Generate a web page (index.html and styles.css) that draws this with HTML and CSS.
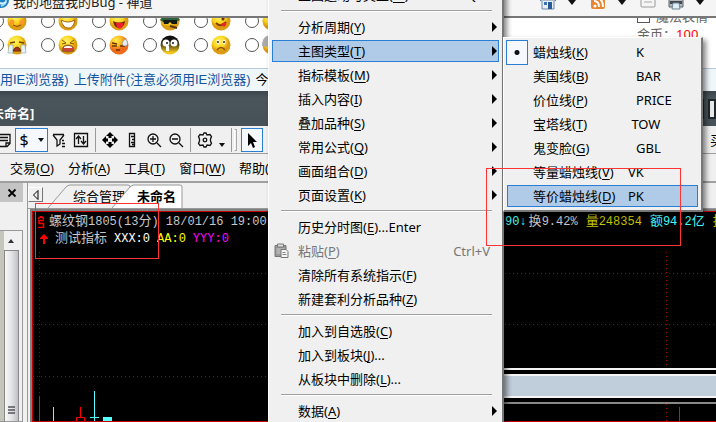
FILE: index.html
```html
<!DOCTYPE html>
<html lang="zh-CN">
<head>
<meta charset="utf-8">
<title>未命名</title>
<link rel="stylesheet" href="styles.css">
</head>
<body>
<svg class="defs" aria-hidden="true">
  <defs>
    <radialGradient id="gold" cx="40%" cy="30%"><stop offset="0" stop-color="#fff36a"/><stop offset=".65" stop-color="#fbd51c"/><stop offset="1" stop-color="#dc9c12"/></radialGradient>
    <radialGradient id="orange" cx="35%" cy="25%"><stop offset="0" stop-color="#fff04a"/><stop offset=".6" stop-color="#fbb623"/><stop offset="1" stop-color="#f06a1c"/></radialGradient>
    <linearGradient id="dark" x2="0" y2="1"><stop offset=".3" stop-color="#111"/><stop offset=".9" stop-color="#f4c81c"/></linearGradient>
  </defs>
</svg>
<header class="browser">
  <svg class="globe" viewBox="0 0 16 16"><circle cx="8" cy="8" r="8" fill="#1f7fc4"/><path d="M2 5q6-5 11 1q1 6-5 8" fill="none" stroke="#9bd8f6" stroke-width="2"/><path d="M5 10q4 3 8 0" fill="none" stroke="#d6f1fd" stroke-width="2"/></svg>
  <span class="page-title">我的地盘我的Bug - 禅道</span>
  <nav class="browser-tools">
    <svg viewBox="0 0 16 16"><path d="M2 6h12v9H2z" fill="#e8eef5" stroke="#6f87a5"/><path d="M0 7l8-7 8 7" fill="#a8bdd2" stroke="#5c7696"/><path d="M8 8h4v7H8z" fill="#285a96"/><path d="M4 8h3v3H4z" fill="#3b74b4"/></svg>
    <i class="caret"></i>
    <svg viewBox="0 0 16 16"><rect x="1" y="1" width="14" height="14" rx="2" fill="#e98430"/><path d="M4 3q9 0 9 10M4 7q5 0 5 6" fill="none" stroke="#fff" stroke-width="2"/><circle cx="5" cy="12" r="1.5" fill="#fff"/></svg>
    <i class="caret"></i>
    <svg viewBox="0 0 16 16"><rect x="1" y="1" width="14" height="12" rx="1" fill="#f5f5f5" stroke="#999"/><path d="M4 8h8" stroke="#aaa"/></svg>
    <svg viewBox="0 0 16 16"><path d="M1 5h14v8H1z" fill="#b4b8bb" stroke="#5d6367"/><path d="M2 7h12v3H2z" fill="#43494d"/><path d="M5 9h6l1 6H4z" fill="#dff0fa" stroke="#6f8795"/></svg>
    <i class="caret"></i>
    <span>页面</span>
  </nav>
</header>

<main class="page">
  <div class="faces">
    <div class="face-row">
      <label><input type="radio" name="face" aria-label="害羞"><svg viewBox="0 0 20 20"><circle cx="10" cy="10" r="9.5" fill="url(#gold)"/><circle cx="5" cy="11" r="2.5" fill="#f79a2a"/><circle cx="15" cy="11" r="2.5" fill="#f79a2a"/><path d="M6 14q4 3 8 0" fill="none" stroke="#974510"/></svg></label>
      <label><input type="radio" name="face" aria-label="大笑"><svg viewBox="0 0 20 20"><circle cx="10" cy="10" r="9.5" fill="url(#gold)"/><path d="M3 9q7 4 14 0q-2 9-7 8q-5 0-7-8z" fill="#fff" stroke="#a86716"/></svg></label>
      <label><input type="radio" name="face" aria-label="吐舌"><svg viewBox="0 0 20 20"><circle cx="10" cy="10" r="9.5" fill="url(#gold)"/><path d="M4 10q6 3 12 0-1 7-6 7t-6-7z" fill="#7e2110"/><path d="M7 12h7v3q-3 5-6 1z" fill="#ef202c"/></svg></label>
      <label><input type="radio" name="face" aria-label="大兵"><svg viewBox="0 0 20 20"><circle cx="10" cy="10" r="9.5" fill="url(#gold)"/><path d="M0 9q10-14 20 0l-4 2H3z" fill="#2b623d"/><path d="M3 9h14v4h-5l-2-2-2 2H4z" fill="#161a14"/><path d="M10 15l7 2" stroke="#583315" stroke-width="2"/></svg></label>
      <label><input type="radio" name="face" aria-label="馋"><svg viewBox="0 0 20 20"><circle cx="10" cy="10" r="9.5" fill="url(#gold)"/><path d="M5 12q5 5 10-1" fill="none" stroke="#8d3c0b" stroke-width="2"/><path d="M10 13q6-4 5 1-2 4-5-1z" fill="#e72824"/><circle cx="12" cy="8" r="1.5" fill="#733410"/></svg></label>
      <label><input type="radio" name="face" aria-label="微笑"><svg viewBox="0 0 20 20"><circle cx="10" cy="10" r="9.5" fill="url(#gold)"/></svg></label>
    </div>
    <div class="face-row">
      <label><input type="radio" name="face" aria-label="大哭"><svg viewBox="0 0 20 20"><circle cx="10" cy="10" r="9.5" fill="url(#gold)"/><path d="M3 8l5-1M12 7l5 1" stroke="#75440a" stroke-width="1.5"/><path d="M2 10h4v8H1zM14 10h4l1 8h-5z" fill="#e5f3f6" stroke="#8d9d95" stroke-width=".6"/><path d="M6 16q4-8 8 0z" fill="#a83520" stroke="#663007"/></svg></label>
      <label><input type="radio" name="face" aria-label="抓狂"><svg viewBox="0 0 20 20"><circle cx="10" cy="10" r="9.5" fill="url(#gold)"/><path d="M4 5l4 3-4 1M16 5l-4 3 4 1" fill="none" stroke="#87540d"/><path d="M4 16q0-6 6-6t6 6q-6 2-12 0z" fill="#c9433d" stroke="#93611a"/><path d="M6 12q4-2 8 0v1H6z" fill="#fff"/></svg></label>
      <label><input type="radio" name="face" aria-label="冷汗"><svg viewBox="0 0 20 20"><circle cx="10" cy="10" r="9.5" fill="url(#orange)"/><path d="M3 8l5 1M3 11h5M11 11h5M7 15h4" stroke="#6b3509" stroke-width="1.3"/><path d="M16 4q-5 5-1 7 5 0 3-5z" fill="#e6eff2" stroke="#7f9aa4" stroke-width=".6"/></svg></label>
      <label><input type="radio" name="face" aria-label="阴险"><svg viewBox="0 0 20 20"><circle cx="10" cy="10" r="9.5" fill="url(#dark)"/><circle cx="6" cy="8" r="3.5" fill="#fff"/><circle cx="14" cy="8" r="3.5" fill="#fff"/><circle cx="7" cy="8" r="1" fill="#111"/><circle cx="13" cy="8" r="1" fill="#111"/><path d="M6 11h3v5H6z" fill="#fff"/></svg></label>
      <label><input type="radio" name="face" aria-label="难过"><svg viewBox="0 0 20 20"><circle cx="10" cy="10" r="9.5" fill="url(#gold)"/><ellipse cx="7" cy="7" rx="1.5" ry="2.5" fill="#fff"/><ellipse cx="13" cy="7" rx="1.5" ry="2.5" fill="#fff"/><path d="M7 6v2M13 6v2" stroke="#452604" stroke-width="1.5"/><path d="M6 15q4-5 8 0" fill="none" stroke="#8b4d08" stroke-width="1.3"/></svg></label>
      <label><input type="radio" name="face" aria-label="老人"><svg viewBox="0 0 20 20"><circle cx="10" cy="10" r="9.5" fill="url(#gold)"/><path d="M0 11q0-11 10-11v7l-4 5z" fill="#aaa"/></svg></label>
    </div>
  </div>
  <div class="options">
    <label><input type="checkbox"> 魔法表情</label>
    <div>金币：<b>100</b></div>
  </div>
</main>
<div class="upload"><a href="#">须用IE浏览器)</a><a href="#">上传附件(注意必须用IE浏览器)</a><em>今</em></div>

<div class="titlebar"><strong>未命名]</strong><i></i><i></i></div>

<div class="toolbar">
  <button aria-label="报表"><svg viewBox="0 0 16 16"><path d="M1 2.500h13v9l-3 3H1zM2 5.500h10M2 8.500h10M10 14v-3h4" class="line"/></svg></button>
  <button class="money active"><span>$</span><i class="caret"></i></button>
  <button aria-label="筛选"><svg viewBox="0 0 16 16"><path d="M2 2.500h11M2 3l4 5v6l3-2V8l4-5M11 8.500h2M11 11.500h3M11 14.500h3" class="line"/></svg></button>
  <button aria-label="排序"><svg viewBox="0 0 16 16"><path d="M1.500 1.500h13v13h-13zM5.500 12V4.500M3 7l2.500-3L8 7M10.500 4v8M8 9l2.500 3L13 9" class="line"/></svg></button>
  <hr>
  <button aria-label="移动"><svg viewBox="0 0 16 16"><path d="M8 0l4 4H9.500v2h-3V4H4zM8 16l4-4H9.500v-2h-3v2H4zM0 8l4-4v2.500h2v3H4V12zM16 8l-4-4v2.500h-2v3h2V12z"/></svg></button>
  <button aria-label="测量"><svg viewBox="0 0 16 16"><path d="M5.500 1.500h5v13h-5zM7 4.500h3M8 7.500h2M7 10.500h3M8 12.500h2" class="line"/></svg></button>
  <button aria-label="放大"><svg viewBox="0 0 16 16"><circle cx="7" cy="7" r="5" class="line"/><path d="M4 7h6M7 4v6M11 11l4 4" class="line"/></svg></button>
  <button aria-label="缩小"><svg viewBox="0 0 16 16"><circle cx="7" cy="7" r="5" class="line"/><path d="M4 7h6M11 11l4 4" class="line"/></svg></button>
  <hr>
  <button class="gear" aria-label="设置"><svg viewBox="0 0 16 16"><path d="M6 3l1-2h2l1 2 3-.5 1.500 2L13.500 7v2l1 2.500-1.500 2-3-.5-1 2H7l-1-2-3 .5-1.500-2 1-2.500V7l-1-2.500 1.500-2z" class="line"/><circle cx="8" cy="8" r="1.800" class="line"/></svg><i class="caret"></i></button>
  <hr><span class="grip"></span>
  <button class="active pointer" aria-label="选择"><svg viewBox="0 0 16 16"><path d="M4 1v13l3-3 2 5 2-1-2-5h4z"/></svg></button>
  <span class="buy">买</span>
</div>

<nav class="menubar">
  <button>交易(<u>O</u>)</button><button>分析(<u>A</u>)</button><button>工具(<u>T</u>)</button><button>窗口(<u>W</u>)</button><button>帮助(<u>H</u>)</button>
</nav>

<section class="workspace">
  <aside class="dock">
    <button class="close" aria-label="关闭"><svg viewBox="0 0 10 10"><path d="M1.500 1.500l7 7M8.500 1.500l-7 7" stroke="#000" stroke-width="1.800"/></svg></button>
    <div class="list"><div class="scroll"><svg viewBox="0 0 14 19"><path d="M4 12l3-4 3 4z" fill="#333"/></svg><div class="thumb"><svg viewBox="0 0 8 9"><path d="M0 1h7M0 4h7M0 7h7" stroke="#555" stroke-width="1.500"/></svg></div></div></div>
  </aside>
  <div class="content">
    <div class="tabs">
      <button class="prev" aria-label="上一个"><svg viewBox="0 0 10 10"><path d="M7 .5v9L2.500 5z" fill="none" stroke="#000"/></svg></button>
      <button class="tab first"><svg viewBox="0 0 84 24"><path d="M0 24L18 3q2-2 4-2h58q2 0 2 2v21" fill="#f0f0f0" stroke="#999"/></svg><span>综合管理</span></button>
      <button class="tab current"><svg viewBox="0 0 72 24"><path d="M0 24L18 3q2-2 4-2h46q2 0 2 2v21" fill="#fff" stroke="#999"/></svg><span>未命名</span></button>
    </div>
    <div class="chart">
      <svg class="plot" aria-hidden="true"><g transform="translate(-33 -212)">
        <path class="grid" d="M33 273.500H2000M33 324.500H2000M33 376.500H500M39.500 252V396M666.500 252V366M666.500 404V1000"/>
        <path d="M39.500 396V1000M80.500 407v10M76.500 1000V417.500h8V1000M679.500 407V1000" fill="none" stroke="#f00"/>
        <path d="M53.500 407V1000M94.500 391V1000M90 417.500h9" stroke="#5ff"/><path d="M103 417h9v600h-9z" fill="#5ff"/>
        <path d="M300 368h2000v2H300zM300 374h2000v24H300z" fill="#f4f4f4"/><path d="M300 376h2000v20H300z" fill="#c0cdda"/><path d="M300 402h2000v2H300z" fill="#888"/>
      </g></svg>
      <div class="quote"><div class="symbol"><svg viewBox="0 0 8 12"><path d="M1 3l3-3 3 3M7 4.500H2v3h4.500v4H1" fill="none" stroke="#f00" stroke-width="1.500"/></svg><b>螺纹钢</b>1805(13<b>分</b>) 18/01/16 19:00(</div><div class="stats"><span class="cyan">90↓</span><span><b>换</b>9.42%</span><span class="yellow"><b>量</b>248354</span><span class="cyan"><b>额</b>94.2<b>亿</b></span><span class="yellow"><b>持</b></span></div></div>
      <div class="quote"><svg viewBox="0 0 8 12"><path d="M0 5l4-4 4 4v1H5v5H3V6H0z" fill="#f00"/></svg><span class="metric"><b>测试指标</b></span><span class="metric white">XXX:0</span><span class="metric bright">AA:0</span><span class="metric magenta">YYY:0</span></div>
    </div>
  </div>
</section>

<div class="menu context">
  <button>主图运动与类型(<u>M</u>)<kbd class="near">Q</kbd></button>
  <hr>
  <button class="sub">分析周期(<u>Y</u>)</button>
  <button class="sub selected">主图类型(<u>T</u>)</button>
  <button class="sub">指标模板(<u>M</u>)</button>
  <button class="sub">插入内容(<u>I</u>)</button>
  <button class="sub">叠加品种(<u>S</u>)</button>
  <button class="sub">常用公式(<u>Q</u>)</button>
  <button class="sub">画面组合(<u>D</u>)</button>
  <button class="sub">页面设置(<u>K</u>)</button>
  <hr>
  <button>历史分时图(<u>E</u>)...Enter</button>
  <button class="paste" disabled><svg viewBox="0 0 16 16"><path d="M1.500 2.500h11v11h-11z" fill="#999" stroke="#777"/><path d="M4 1h6v3H4z" fill="#ddd" stroke="#777"/><path d="M3 6h8M3 8h8M3 10h8" stroke="#c8c8c8"/><path d="M7.500 6.500h5l2 2v6h-7z" fill="#f4f4f4" stroke="#777"/><path d="M9 9.500h3M9 11.500h4" stroke="#888"/></svg>粘贴(<u>P</u>)<kbd>Ctrl+V</kbd></button>
  <button>清除所有系统指示(<u>F</u>)</button>
  <button>新建套利分析品种(<u>Z</u>)</button>
  <hr>
  <button>加入到自选股(<u>C</u>)</button>
  <button>加入到板块(<u>J</u>)...</button>
  <button>从板块中删除(<u>L</u>)...</button>
  <hr>
  <button class="sub">数据(<u>A</u>)</button>
</div>

<div class="menu types">
  <button class="checked"><span class="wide">蜡烛线(<u>K</u>)</span>K</button>
  <button><span class="wide">美国线(<u>B</u>)</span>BAR</button>
  <button><span class="wide">价位线(<u>P</u>)</span>PRICE</button>
  <button><span>宝塔线(<u>T</u>)</span>&nbsp;TOW</button>
  <button><span class="wide">鬼变脸(<u>G</u>)</span>GBL</button>
  <button><span>等量蜡烛线(<u>V</u>)</span>VK</button>
  <button class="selected"><span>等价蜡烛线(<u>D</u>)</span>PK</button>
</div>
<div class="mark mark-symbol"></div>
<div class="mark mark-type"></div>
</body>
</html>
```
FILE: styles.css
```css
* { box-sizing: border-box; }
body {
  margin: 0;
  height: 100vh;
  overflow: hidden;
  position: relative;
  display: flex;
  flex-direction: column;
  background: #f0f0f0;
  color: #000;
  font: 13px/20px "Noto Sans", "Noto Sans CJK SC", sans-serif;
}
button { font: inherit; color: inherit; background: none; border: 0; padding: 0; }
svg { display: block; flex: none; }
b { font-weight: 400; }
u { text-underline-offset: 2px; }
.defs { position: absolute; width: 0; height: 0; }
.line { fill: none; stroke: #111; stroke-width: 1.3; }
.caret { border: 3px solid transparent; border-top: 4px solid #111; border-bottom: 0; flex: none; }

.browser { flex: none; height: 18px; display: flex; background: #f5f5f5; border-bottom: 2px solid #777; overflow: hidden; }
.browser > * { margin-top: -8px; }
.globe { width: 16px; height: 16px; margin-left: -7px; }
.page-title { flex: 1; margin-left: 4px; color: #222; }
.browser-tools { display: flex; align-items: center; gap: 12px; height: 20px; width: 176px; }
.browser-tools svg { width: 16px; height: 16px; }
.browser-tools .caret { border-width: 5px 4px 0; margin-right: 2px; }
.browser-tools span { flex: none; }

.page { flex: none; height: 50px; display: flex; background: #fff; overflow: hidden; }
.faces { flex: 1; margin: -9px 0 0 -10px; }
.face-row { display: flex; height: 24px; }
.face-row label { display: flex; align-items: center; gap: 3px; width: 51px; flex: none; }
.face-row svg { width: 20px; height: 20px; }
.face-row input { appearance: none; width: 14px; height: 14px; margin: 0; border: 1px solid #555; border-radius: 50%; background: #fff; }
.options { width: 79px; flex: none; margin-top: -11px; color: #666; line-height: 18px; white-space: nowrap; }
.options label { display: flex; gap: 6px; align-items: center; }
.options input { appearance: none; width: 13px; height: 13px; margin: 0; border: 1px solid #555; }
.options b { color: #f00; }

.upload { flex: none; display: flex; gap: 5px; height: 23px; padding-top: 1px; border-top: 1px solid #b4cbdc; background: #f0f7fb; white-space: nowrap; font-family: "Liberation Sans", "Noto Sans CJK SC", sans-serif; }
.upload a { color: #15559f; text-decoration: none; }
.upload a:first-child { margin-left: -13px; }
.upload em { font-style: normal; }

.titlebar { flex: none; height: 35px; display: flex; align-items: center; gap: 4px; background: linear-gradient(#3c464c, #4a555b 20%, #465258); color: #fff; }
.titlebar strong { flex: 1; margin: 8px 0 0 -9px; }
.titlebar i { width: 8px; height: 20px; background: #e8e8e8; border: 2px solid #20282c; }

.toolbar { flex: none; height: 28px; display: flex; align-items: center; gap: 6px; border-bottom: 1px solid #a0a0a0; overflow: hidden; }
.toolbar button { display: flex; align-items: center; justify-content: center; flex: none; }
.toolbar svg { width: 16px; height: 16px; }
.toolbar button:first-child { margin-left: -4px; }
.toolbar .active { border: 1px solid #2a7fd4; height: 24px; background: #f5f9fd; }
.toolbar .money { width: 33px; gap: 9px; font-size: 16px; margin: 0 -3px; }
.toolbar hr { width: 1px; height: 24px; margin: 0; border: 0; background: #999; flex: none; }
.toolbar .gear { gap: 6px; }
.gear .caret { margin-top: 10px; }
.grip { width: 3px; height: 22px; border: 1px solid #aaa; border-left-color: #fff; margin-left: -4px; }
.toolbar .pointer { width: 22px; margin-left: -2px; }
.buy { margin: 0 -7px 0 auto; }

.menubar { flex: none; height: 29px; display: flex; align-items: center; gap: 14px; padding-left: 10px; border-bottom: 2px solid #a0a0a0; }

.workspace { flex: 1; display: flex; min-height: 0; }
.dock { flex: none; width: 28px; display: flex; flex-direction: column; gap: 28px; border-right: 1px solid #999; }
.close { width: 23px; height: 19px; background: #c4c4c4; display: flex; align-items: center; justify-content: center; }
.close svg { width: 10px; height: 10px; }
.list { flex: 1; width: 23px; display: flex; background: #c5c5b9; border: 1px solid #999; border-left: 0; }
.scroll { margin-left: 4px; flex: 1; display: flex; flex-direction: column; background: #f0f0f0; }
.scroll > svg { width: 14px; height: 19px; }
.thumb { flex: 1; width: 15px; display: flex; align-items: end; justify-content: center; padding-bottom: 6px; background: linear-gradient(90deg, #f8f8f8, #e3e3e5 50%, #bfc0c8); border: 1px solid #888; border-bottom: 0; }
.thumb svg { width: 8px; height: 9px; }
.content { flex: 1; min-width: 0; display: flex; flex-direction: column; }
.tabs { flex: none; height: 26px; display: flex; align-items: end; border-bottom: 1px solid #999; }
.prev { width: 15px; height: 15px; margin: 0 5px 6px 0; border: 1px solid #777; border-top-color: #fff; border-left-color: #fff; display: grid; place-items: center; }
.prev svg { width: 10px; height: 10px; }
.tab { position: relative; height: 24px; padding-left: 25px; text-align: left; white-space: nowrap; }
.tab svg { position: absolute; left: 0; top: 0; width: 100%; height: 24px; }
.tab span { position: relative; }
.first { width: 84px; }
.current { width: 72px; margin-left: -20px; font-weight: 700; }
.chart { flex: 1; margin: 2px 0 0 4px; position: relative; overflow: hidden; background: #000; border: 1px solid #c00000; border-right: 0; box-shadow: 0 0 0 2px #808080; padding-top: 1px; color: #c8c8c8; font: 12px/16px "Liberation Mono", "Noto Sans CJK SC", monospace; }
.chart b { font-size: 13px; }
.plot { position: absolute; left: 0; top: 0; width: 100%; height: 100%; }
.grid { fill: none; stroke: #a00000; stroke-dasharray: 1 3; }
.quote { position: relative; display: flex; align-items: center; height: 17px; padding-left: 4px; white-space: nowrap; }
.quote svg { width: 8px; height: 12px; }
.quote + .quote { padding-left: 7px; }
.symbol { flex: none; width: 468px; display: flex; align-items: center; white-space: pre; }
.symbol svg { margin-right: 4px; }
.stats { display: flex; gap: 8px; }
.stats .cyan:first-child { margin-right: -6px; }
.cyan { color: #4ff; }
.yellow { color: #c3c300; }
.metric { margin-left: 7px; }
.white { color: #fff; }
.bright { color: #ff0; }
.magenta { color: #f0f; }

.menu { position: absolute; padding: 3px; background: #f0f0f0; border: 1px solid #fff; border-right: 2px solid #777; box-shadow: 3px 3px 5px #0007; }
.menu button { display: flex; align-items: center; width: 100%; height: 24px; white-space: nowrap; position: relative; }
.context { left: 268px; top: -21px; width: 236px; }
.context button { padding-left: 26px; }
.context hr { height: 2px; margin: 3px 7px 3px 9px; border: 0; border-top: 1px solid #a0a0a0; border-bottom: 1px solid #fff; }
.menu .selected { background: #b0cbe8; box-shadow: inset 0 0 0 1px #2a7fd4; }
.menu .selected { height: 22px; margin: 1px 0; }
.sub::after { content: ""; margin: 0 2px 0 auto; border: 5px solid transparent; border-left-color: #000; border-right: 0; }
.menu kbd { font: inherit; margin: 0 9px 0 auto; }
.menu .near { margin-right: 22px; }
.menu .paste { color: #777; padding-left: 1px; }
.paste svg { width: 17px; height: 16px; margin-right: 8px; }
.types { left: 503px; top: 37px; width: 200px; padding: 2px 3px; border-bottom: 2px solid #777; }
.types button { padding-left: 26px; }
.types span { flex: none; width: 95px; text-align: left; }
.types .wide { width: 103px; }
.checked::before { content: ""; position: absolute; left: -1px; top: 0; width: 20px; height: 23px; border: 1px solid #2a7fd4; background: radial-gradient(circle, #111 2px, #f5f9fd 3px); }
.mark { position: absolute; border: 1px solid #f33; pointer-events: none; }
.mark-symbol { left: 35px; top: 203px; width: 124px; height: 56px; }
.mark-type { left: 486px; top: 168px; width: 195px; height: 78px; }
```
